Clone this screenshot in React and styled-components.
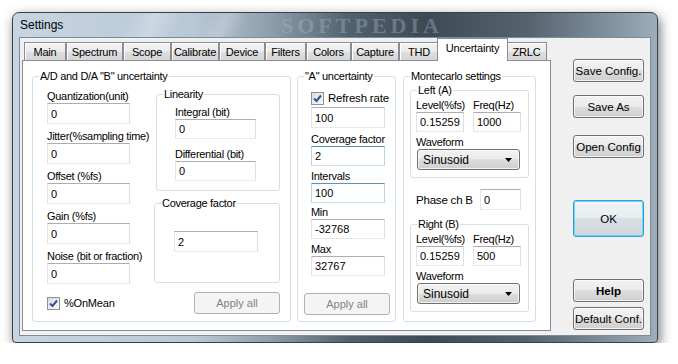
import styled, { createGlobalStyle } from 'styled-components'

const GlobalStyle = createGlobalStyle`
  body {
    margin: 0;
    background: #fff;
    font-family: "Liberation Sans", Arial, sans-serif;
    font-size: 11px;
    color: #000;
  }
`

const Page = styled.div`
  padding: 12px 0 0 12px;
`

const Window = styled.div`
  width: 646px;
  height: 331px;
  box-sizing: border-box;
  border: 1px solid #34424e;
  border-radius: 7px 7px 4px 4px;
  background: linear-gradient(90deg, #c7d5e2 0%, #b9c8d6 28%, #8e9eac 40%, #52616e 52%, #3d4a56 64%, #55636f 80%, #8696a3 94%, #9eadb9 100%);
  box-shadow: 2px 4px 12px rgba(0, 0, 0, 0.55);
  display: flex;
  flex-direction: column;
  overflow: hidden;
`

const TitleBar = styled.div`
  position: relative;
  height: 24px;
  display: flex;
  align-items: center;
  padding-left: 7px;
  font-size: 12px;
  background: linear-gradient(115deg, transparent 18%, rgba(255, 255, 255, 0.25) 22%, transparent 26%, transparent 30%, rgba(255, 255, 255, 0.2) 33%, transparent 36%);
`

const Watermark = styled.span`
  position: absolute;
  left: 268px;
  top: 1px;
  height: 23px;
  line-height: 23px;
  font-family: "Liberation Serif", serif;
  font-weight: bold;
  font-size: 22px;
  letter-spacing: 4px;
  color: rgba(170, 186, 200, 0.4);
`

const TitleText = styled.span`
  position: relative;
`

const Client = styled.div`
  flex: 1;
  margin: 0 6px 6px;
  box-sizing: border-box;
  border: 1px solid #7b8b99;
  background: #f0f0f0;
  display: flex;
  padding-left: 2px;
`

const TabControl = styled.div`
  width: 529px;
  display: flex;
  flex-direction: column;
`

const TabStrip = styled.div`
  height: 22px;
  display: flex;
  align-items: flex-end;
  padding-left: 2px;
`

const Tab = styled.div`
  box-sizing: border-box;
  width: ${p => p.$w}px;
  height: 18px;
  border: 1px solid #898c95;
  border-bottom: none;
  background: linear-gradient(#f3f3f3, #ebebeb 50%, #dedede 50%, #d6d6d6);
  box-shadow: inset 1px 1px 0 #fff;
  display: flex;
  align-items: center;
  justify-content: center;
  white-space: nowrap;
  font-size: 11px;
  letter-spacing: -0.2px;
`

const ActiveTab = styled(Tab)`
  position: relative;
  z-index: 1;
  width: ${p => p.$w + 4}px;
  height: 23px;
  margin: 0 -2px -1px;
  background: #fff;
  box-shadow: none;
  padding-bottom: 4px;
`

const Panel = styled.div`
  height: 271px;
  box-sizing: border-box;
  border: 1px solid #898c95;
  background: #fff;
  display: flex;
  align-items: flex-start;
  padding: 9px 0 0 9px;
`

const GroupBox = styled.fieldset`
  box-sizing: border-box;
  margin: ${p => p.$m || '0'};
  padding: 0;
  min-width: 0;
  width: ${p => p.$w}px;
  height: ${p => p.$h}px;
  border: 1px solid #d5dfe5;
  border-radius: 3px;
`

const Legend = styled.legend`
  margin-left: 6px;
  padding: 0 1px;
  line-height: 13px;
  font-size: 11px;
  letter-spacing: -0.3px;
`

const Body = styled.div`
  padding: ${p => p.$pad};
`

const Row = styled.div`
  display: flex;
  align-items: flex-start;
  gap: ${p => p.$gap || 0}px;
`

const Column = styled.div`
  display: flex;
  flex-direction: column;
  width: ${p => p.$w}px;
  margin: ${p => p.$m || '0'};
  gap: ${p => p.$gap || 0}px;
`

const Field = styled.div`
  display: flex;
  flex-direction: column;
  margin-top: ${p => p.$mt || 0}px;
`

const Label = styled.span`
  line-height: 14px;
  white-space: nowrap;
  letter-spacing: -0.3px;
`

const TextBox = styled.input`
  box-sizing: border-box;
  width: ${p => p.$w}px;
  height: ${p => p.$h || 21}px;
  margin: ${p => p.$m || '0'};
  padding: 0 3px;
  border: 1px solid;
  border-color: ${p => p.$hot ? '#5794bf #b7d5ea #c7e2f1 #b7d5ea' : '#abadb3 #dbdfe6 #e3e9ef #e2e3ea'};
  background: #fff;
  font-family: "Liberation Sans", Arial, sans-serif;
  font-size: 11px;
  color: #000;
  outline: none;
`

const CheckRow = styled.label`
  display: flex;
  align-items: center;
  gap: 4px;
  line-height: 14px;
  letter-spacing: -0.2px;
  font-size: ${p => p.$fs || 11}px;
`

const Box = styled.span`
  box-sizing: border-box;
  width: 13px;
  height: 13px;
  border: 1px solid #8e8f8f;
  background: linear-gradient(135deg, #d9dde6, #f7f8fa);
  display: flex;
  align-items: center;
  justify-content: center;
`

const Button = styled.button`
  box-sizing: border-box;
  width: ${p => p.$w || 71}px;
  height: ${p => p.$h || 23}px;
  margin: ${p => p.$m || '0'};
  padding: 0;
  border: 1px solid #707070;
  border-radius: 3px;
  background: linear-gradient(#f2f2f2, #ebebeb 50%, #dddddd 50%, #cfcfcf);
  box-shadow: inset 0 0 0 1px rgba(255, 255, 255, 0.7);
  font-family: "Liberation Sans", Arial, sans-serif;
  font-size: 11.5px;
  font-weight: ${p => p.$bold ? 'bold' : 'normal'};
  color: #000;
  white-space: nowrap;
`

const DefaultButton = styled(Button)`
  border-color: #2b9fd8;
  background: linear-gradient(#f0f4f6, #e8edf0 50%, #d9e0e5 50%, #ced6dc);
  box-shadow: inset 0 0 0 1px #6fd4f8;
`

const DisabledButton = styled(Button)`
  border-color: #adb2b5;
  background: #f4f4f4;
  box-shadow: none;
  color: #838383;
  font-size: 11px;
`

const Select = styled.div`
  box-sizing: border-box;
  width: 103px;
  height: 21px;
  margin-left: 1px;
  border: 1px solid #707070;
  border-radius: 3px;
  background: linear-gradient(#f2f2f2, #ebebeb 50%, #dddddd 50%, #cfcfcf);
  box-shadow: inset 0 0 0 1px rgba(255, 255, 255, 0.7);
  display: flex;
  align-items: center;
  justify-content: space-between;
  padding: 0 7px 0 5px;
  font-size: 12px;
`

const SideButtons = styled.div`
  display: flex;
  flex-direction: column;
  margin-left: 22px;
`

const Check = () => (
  <Box>
    <svg width="9" height="9" viewBox="0 0 9 9">
      <path d="M1 4.5 L3.5 7 L8 1.5" fill="none" stroke="#3a4f8a" strokeWidth="2" />
    </svg>
  </Box>
)

const Arrow = () => (
  <svg width="7" height="4" viewBox="0 0 7 4">
    <path d="M0 0 H7 L3.5 4 Z" fill="#000" />
  </svg>
)

const tabs = [
  ['Main', 42], ['Spectrum', 57], ['Scope', 48], ['Calibrate', 48], ['Device', 46],
  ['Filters', 41], ['Colors', 45], ['Capture', 48], ['THD', 40], ['Uncertainty', 67], ['ZRLC', 41],
]

const bFields = [
  ['Quantization(unit)', '0'],
  ['Jitter(%sampling time)', '0'],
  ['Offset (%fs)', '0'],
  ['Gain (%fs)', '0'],
  ['Noise (bit or fraction)', '0'],
]

const Channel = ({ title, level, freq, mt }) => (
  <GroupBox $w={119} $h={94} $m={`${mt}px 0 0 0`}>
    <Legend>{title}</Legend>
    <Body $pad="1px 0 0 5px">
      <Row $gap={9}>
        <Column $w={48}>
          <Label>Level(%fs)</Label>
          <TextBox $w={48} $h={20} readOnly value={level} />
        </Column>
        <Column $w={48}>
          <Label>Freq(Hz)</Label>
          <TextBox $w={48} $h={20} readOnly value={freq} />
        </Column>
      </Row>
      <Field $mt={3}>
        <Label>Waveform</Label>
        <Select>Sinusoid<Arrow /></Select>
      </Field>
    </Body>
  </GroupBox>
)

const PhaseRow = styled.div`
  display: flex;
  align-items: center;
  margin-top: 11px;
  padding-left: 6px;
`

const PhaseLabel = styled.span`
  width: 64px;
  font-size: 11.5px;
  letter-spacing: -0.2px;
`

const Footer = styled.div`
  display: flex;
  justify-content: space-between;
  align-items: center;
  margin-top: 8px;
`

export default function App() {
  return (
    <>
      <GlobalStyle />
      <Page>
        <Window>
          <TitleBar>
            <Watermark>SOFTPEDIA</Watermark>
            <TitleText>Settings</TitleText>
          </TitleBar>
          <Client>
            <TabControl>
              <TabStrip>
                {tabs.map(([name, w]) =>
                  name === 'Uncertainty'
                    ? <ActiveTab key={name} $w={w}>{name}</ActiveTab>
                    : <Tab key={name} $w={w}>{name}</Tab>
                )}
              </TabStrip>
              <Panel>
                <GroupBox $w={259} $h={252}>
                  <Legend>A/D and D/A "B" uncertainty</Legend>
                  <Body $pad="6px 10px 0 14px">
                    <Row>
                      <Column $w={83} $gap={5}>
                        {bFields.map(([label, value]) => (
                          <Field key={label}>
                            <Label>{label}</Label>
                            <TextBox $w={83} readOnly value={value} />
                          </Field>
                        ))}
                      </Column>
                      <Column $w={125} $m="-1px 0 0 25px">
                        <GroupBox $w={124} $h={103} $m="0 0 0 1px">
                          <Legend>Linearity</Legend>
                          <Body $pad="4px 0 0 18px">
                            <Field>
                              <Label>Integral (bit)</Label>
                              <TextBox $w={81} $h={20} readOnly value="0" />
                            </Field>
                            <Field $mt={8}>
                              <Label>Differential (bit)</Label>
                              <TextBox $w={81} $h={20} readOnly value="0" />
                            </Field>
                          </Body>
                        </GroupBox>
                        <GroupBox $w={126} $h={86} $m="6px 0 0 -1px">
                          <Legend>Coverage factor</Legend>
                          <Body $pad="21px 0 0 19px">
                            <TextBox $w={84} readOnly value="2" />
                          </Body>
                        </GroupBox>
                      </Column>
                    </Row>
                    <Footer>
                      <CheckRow><Check />%OnMean</CheckRow>
                      <DisabledButton $w={86} $h={22}>Apply all</DisabledButton>
                    </Footer>
                  </Body>
                </GroupBox>

                <GroupBox $w={99} $h={252} $m="0 0 0 6px">
                  <Legend>"A" uncertainty</Legend>
                  <Body $pad="8px 0 0 13px">
                    <CheckRow $fs={11.5}><Check />Refresh rate</CheckRow>
                    <TextBox $w={74} $m="2px 0 0" readOnly value="100" />
                    <Field $mt={4}>
                      <Label>Coverage factor</Label>
                      <TextBox $w={74} $h={20} $hot readOnly value="2" />
                    </Field>
                    <Field $mt={3}>
                      <Label>Intervals</Label>
                      <TextBox $w={74} $h={20} $hot readOnly value="100" />
                    </Field>
                    <Field $mt={2}>
                      <Label>Min</Label>
                      <TextBox $w={74} $h={20} readOnly value="-32768" />
                    </Field>
                    <Field $mt={3}>
                      <Label>Max</Label>
                      <TextBox $w={74} $h={20} readOnly value="32767" />
                    </Field>
                    <DisabledButton $w={86} $h={22} $m="17px 0 0 -7px">Apply all</DisabledButton>
                  </Body>
                </GroupBox>

                <GroupBox $w={133} $h={252} $m="0 0 0 7px">
                  <Legend>Montecarlo settings</Legend>
                  <Body $pad="1px 0 0 6px">
                    <Channel title="Left (A)" level="0.15259:" freq="1000" mt={0} />
                    <PhaseRow>
                      <PhaseLabel>Phase ch B</PhaseLabel>
                      <TextBox $w={41} readOnly value="0" />
                    </PhaseRow>
                    <Channel title="Right (B)" level="0.15259:" freq="500" mt={8} />
                  </Body>
                </GroupBox>
              </Panel>
            </TabControl>
            <SideButtons>
              <Button $m="21px 0 0">Save Config.</Button>
              <Button $m="13px 0 0">Save As</Button>
              <Button $m="17px 0 0">Open Config</Button>
              <DefaultButton $h={37} $m="42px 0 0">OK</DefaultButton>
              <Button $m="42px 0 0" $bold>Help</Button>
              <Button $m="5px 0 0">Default Conf.</Button>
            </SideButtons>
          </Client>
        </Window>
      </Page>
    </>
  )
}
